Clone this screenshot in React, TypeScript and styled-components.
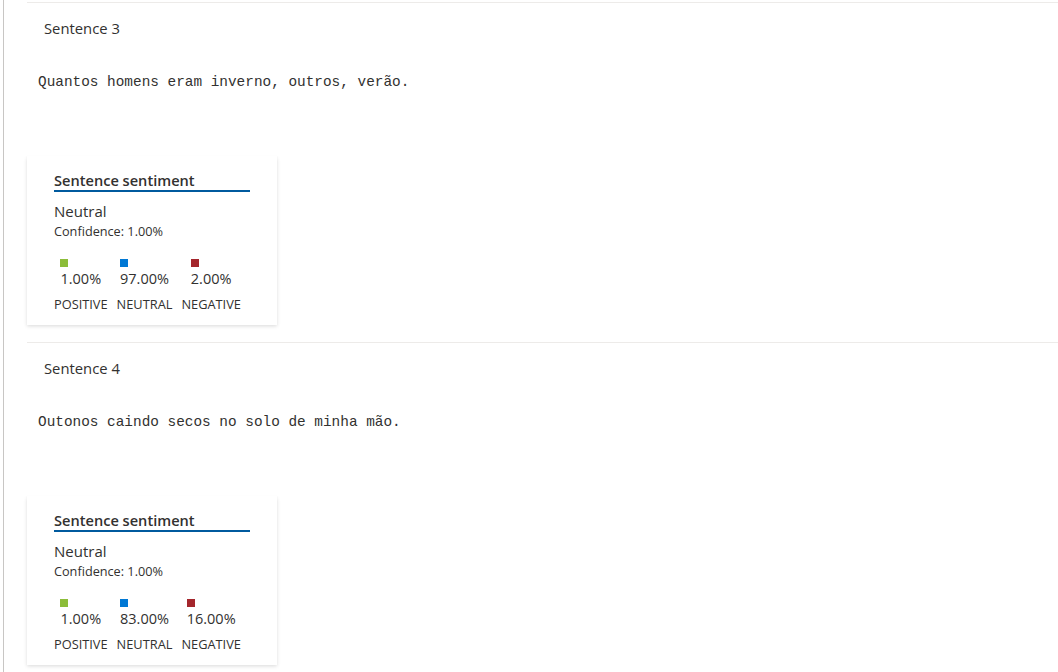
import React from "react";
import styled, { createGlobalStyle } from "styled-components";

const GlobalStyle = createGlobalStyle`
  html, body { margin: 0; padding: 0; background: #ffffff; }
  body { font-family: "Open Sans", "Noto Sans", sans-serif; color: #323130; }
  * { box-sizing: border-box; }
`;

const Page = styled.div`
  margin-left: 3px;
  min-height: 672px;
  border-left: 1px solid #c8c6c4;
  padding: 2px 0 0 23px;
`;

const Section = styled.section`
  border-top: 1px solid #edebe9;
  padding-bottom: 17px;
`;

const SentenceLabel = styled.div`
  padding-left: 17px;
  margin-top: 15px;
  font-size: 14.8px;
  line-height: 20px;
  color: #323130;
`;

const MonoText = styled.div`
  padding-left: 11px;
  margin-top: 34px;
  font-family: "Liberation Mono", "DejaVu Sans Mono", monospace;
  font-size: 14.4px;
  line-height: 20px;
  color: #323130;
`;

const Card = styled.div`
  margin-top: 64px;
  width: 250px;
  height: 169px;
  padding: 15px 27px 0;
  background: #ffffff;
  box-shadow: 0 1.6px 3.6px rgba(0, 0, 0, 0.132), 0 0.3px 0.9px rgba(0, 0, 0, 0.108);
`;

const CardTitle = styled.div`
  font-size: 14.6px;
  font-weight: 600;
  line-height: 19px;
  border-bottom: 2px solid #005a9e;
  color: #323130;
`;

const Verdict = styled.div`
  margin-top: 8px;
  font-size: 15px;
  line-height: 22px;
`;

const Confidence = styled.div`
  margin-top: 1px;
  font-size: 12.7px;
  line-height: 16px;
`;

const Scores = styled.div`
  display: flex;
  gap: 9px;
  margin-top: 20px;
`;

const ScoreColumn = styled.div`
  display: flex;
  flex-direction: column;
  align-items: center;
`;

const ScoreBlock = styled.div`
  display: flex;
  flex-direction: column;
  align-items: flex-start;
`;

const Swatch = styled.span<{ $color: string }>`
  display: block;
  width: 8px;
  height: 8px;
  background: ${(p) => p.$color};
`;

const ScoreValue = styled.div`
  margin-top: 2px;
  font-size: 14.5px;
  line-height: 20px;
`;

const ScoreLabel = styled.div`
  margin-top: 7px;
  font-size: 12.8px;
  line-height: 16px;
`;

type Sentence = {
  index: number;
  text: string;
  scores: [string, string, string];
};

const sentences: Sentence[] = [
  { index: 3, text: "Quantos homens eram inverno, outros, verão.", scores: ["1.00%", "97.00%", "2.00%"] },
  { index: 4, text: "Outonos caindo secos no solo de minha mão.", scores: ["1.00%", "83.00%", "16.00%"] },
];

const categories = [
  { label: "POSITIVE", color: "#8cbd3a" },
  { label: "NEUTRAL", color: "#0078d4" },
  { label: "NEGATIVE", color: "#a4262c" },
];

export default function App() {
  return (
    <>
      <GlobalStyle />
      <Page>
        {sentences.map((s) => (
          <Section key={s.index}>
            <SentenceLabel>Sentence {s.index}</SentenceLabel>
            <MonoText>{s.text}</MonoText>
            <Card>
              <CardTitle>Sentence sentiment</CardTitle>
              <Verdict>Neutral</Verdict>
              <Confidence>Confidence: 1.00%</Confidence>
              <Scores>
                {categories.map((c, i) => (
                  <ScoreColumn key={c.label}>
                    <ScoreBlock>
                      <Swatch $color={c.color} />
                      <ScoreValue>{s.scores[i]}</ScoreValue>
                    </ScoreBlock>
                    <ScoreLabel>{c.label}</ScoreLabel>
                  </ScoreColumn>
                ))}
              </Scores>
            </Card>
          </Section>
        ))}
      </Page>
    </>
  );
}
